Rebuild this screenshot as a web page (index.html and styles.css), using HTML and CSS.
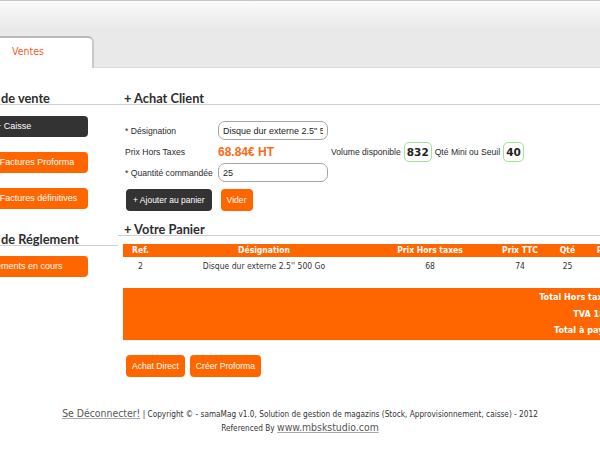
FILE: index.html
```html
<!DOCTYPE html>
<html lang="fr">
<head>
<meta charset="utf-8">
<title>samaMag - Ventes</title>
<link rel="stylesheet" href="styles.css">
</head>
<body>
<div class="topbar">
  <div class="tab">Ventes</div>
</div>
<div class="layout">
  <aside class="sidebar">
    <h3 class="side-title"><span class="pre">Points</span>de vente</h3>
    <a class="sbtn dark">+ Caisse</a>
    <a class="sbtn">+ Factures Proforma</a>
    <a class="sbtn">+ Factures définitives</a>
    <h3 class="side-title second"><span class="pre">Mode</span>de Réglement</h3>
    <a class="sbtn pay">Paiements en cours</a>
  </aside>
  <main class="main">
    <h3 class="sec-title">+ Achat Client</h3>
    <div class="form">
      <div class="frow r1">
        <span class="lbl">* Désignation</span>
        <input class="inp" type="text" value="Disque dur externe 2.5&quot; 500 Go">
      </div>
      <div class="frow r2">
        <span class="lbl">Prix Hors Taxes</span>
        <span class="price">68.84€ HT</span>
        <span class="info">Volume disponible</span>
        <span class="gbox">832</span>
        <span class="info">Qté Mini ou Seuil</span>
        <span class="gbox">40</span>
      </div>
      <div class="frow r3">
        <span class="lbl">* Quantité commandée</span>
        <input class="inp" type="text" value="25">
      </div>
      <div class="actions">
        <a class="btn dark">+ Ajouter au panier</a>
        <a class="btn">Vider</a>
      </div>
    </div>
    <h3 class="sec-title panier">+ Votre Panier</h3>
    <table class="cart">
      <colgroup>
        <col class="c-ref"><col class="c-des"><col class="c-pht"><col class="c-ttc"><col class="c-qte"><col class="c-tot">
      </colgroup>
      <thead>
        <tr><th>Ref.</th><th>Désignation</th><th>Prix Hors taxes</th><th>Prix TTC</th><th>Qté</th><th>Prix Total</th></tr>
      </thead>
      <tbody>
        <tr><td>2</td><td>Disque dur externe 2.5'' 500 Go</td><td>68</td><td>74</td><td>25</td><td>1850</td></tr>
      </tbody>
    </table>
    <div class="totals">
      <div class="trow"><span class="tl">Total Hors taxes :</span><span class="tv">1700 €</span></div>
      <div class="trow"><span class="tl">TVA 18% :</span><span class="tv">306 €</span></div>
      <div class="trow"><span class="tl">Total à payer :</span><span class="tv">2006 €</span></div>
    </div>
    <div class="final">
      <a class="btn">Achat Direct</a>
      <a class="btn">Créer Proforma</a>
    </div>
  </main>
</div>
<footer class="footer">
  <p class="f1"><a class="logout">Se Déconnecter!</a> | Copyright © - samaMag v1.0, Solution de gestion de magazins (Stock, Approvisionnement, caisse) - 2012</p>
  <p class="f2">Referenced By <a class="site">www.mbskstudio.com</a></p>
</footer>
</body>
</html>
```
FILE: styles.css
```css
html, body {
  margin: 0;
  padding: 0;
}
body {
  width: 600px;
  height: 450px;
  overflow: hidden;
  background: #fff;
  font-family: "Liberation Sans", Arial, sans-serif;
  color: #333;
}
.topbar {
  height: 66px;
  border-top: 1px solid #c6c6c6;
  border-bottom: 1px solid #dcdcdc;
  background: linear-gradient(#fbfbfb 0px, #f3f3f3 12px, #e9e9e9 28px, #e9e9e9 100%);
  display: flex;
  align-items: flex-end;
}
.tab {
  width: 80px;
  height: 30px;
  margin-bottom: -1px;
  margin-left: -2px;
  padding-left: 14px;
  background: #fff;
  border-top: 2px solid #b9b9b9;
  border-right: 2px solid #c9c9c9;
  border-top-right-radius: 6px;
  color: #ff5a2a;
  font-family: "DejaVu Sans Condensed", "DejaVu Sans", sans-serif;
  font-size: 10.5px;
  line-height: 26px;
}
.layout {
  display: flex;
  margin-left: -44px;
  width: 760px;
}
.sidebar {
  width: 162px;
  flex: none;
}
.side-title, .sec-title {
  margin: 0;
  font-family: "Lato", sans-serif;
  font-weight: 700;
  font-size: 12.8px;
  line-height: 12px;
  color: #2e2e2e;
  border-bottom: 1px solid #cfcfcf;
  padding-top: 2px;
  padding-bottom: 0;
  white-space: nowrap;
}
.side-title {
  margin-top: 22px;
}
.side-title .pre {
  display: inline-block;
  width: 45px;
}
.side-title.second {
  margin-top: 22px;
}
.sbtn {
  display: block;
  box-sizing: border-box;
  width: 132px;
  height: 21px;
  margin-top: 11px;
  padding-left: 36px;
  border-radius: 4px;
  background: #ff6600;
  color: #fff;
  font-size: 9px;
  line-height: 21px;
  white-space: nowrap;
}
.sbtn + .sbtn { margin-top: 15px; }
.sbtn.dark { background: #333; padding-left: 40px; }
.sbtn.pay { margin-top: 10px; padding-left: 27px; }
.main {
  flex: none;
  width: 598px;
}
.sec-title {
  padding-left: 6px;
}
.main > .sec-title:first-child {
  margin-top: 22px;
}
.form {
  padding-left: 7px;
}
.frow {
  display: flex;
  align-items: center;
}
.r1 { margin-top: 16px; height: 19px; }
.r2 { margin-top: 2px; height: 20px; }
.r3 { margin-top: 1px; height: 19px; }
.lbl {
  width: 93px;
  flex: none;
  font-size: 8.6px;
  color: #2a2a2a;
  white-space: nowrap;
}
.inp {
  box-sizing: border-box;
  width: 110px;
  height: 19px;
  margin: 0;
  padding: 0 4px;
  border: 1px solid #a5a5a5;
  border-radius: 7px;
  font-family: "Liberation Sans", Arial, sans-serif;
  font-size: 9px;
  color: #222;
  background: #fff;
  outline: none;
}
.price {
  width: 113px;
  flex: none;
  font-weight: 700;
  font-size: 12px;
  color: #ff6a13;
}
.info {
  font-size: 8.6px;
  color: #2a2a2a;
  white-space: nowrap;
}
.gbox {
  box-sizing: border-box;
  height: 20px;
  margin: 0 3px 0 3px;
  padding: 0 2px;
  border: 1px solid #a8dca0;
  border-radius: 5px;
  font-family: "DejaVu Sans", sans-serif;
  font-weight: 700;
  font-size: 10.5px;
  line-height: 18px;
  color: #222;
}
.actions {
  display: flex;
  gap: 9px;
  margin-top: 7px;
  padding-left: 1px;
}
.btn {
  display: inline-block;
  height: 22px;
  padding: 0 6px;
  border-radius: 4px;
  background: #ff6600;
  color: #fff;
  font-size: 8.6px;
  line-height: 22px;
  white-space: nowrap;
}
.btn.dark { background: #333; padding: 0 7px; font-size: 8.5px; }
.sec-title.panier {
  margin-top: 10px;
}
.cart {
  margin-top: 8px;
  margin-left: 5px;
  border-collapse: collapse;
  table-layout: fixed;
  width: 526px;
  font-family: "DejaVu Sans Condensed", "DejaVu Sans", sans-serif;
  font-size: 8.5px;
}
.c-ref { width: 35px; }
.c-des { width: 212px; }
.c-pht { width: 120px; }
.c-ttc { width: 60px; }
.c-qte { width: 35px; }
.c-tot { width: 64px; }
.cart th {
  background: #ff6600;
  color: #fff;
  font-weight: 700;
  height: 13px;
  padding: 0;
  line-height: 13px;
  text-align: center;
  white-space: nowrap;
}
.cart td {
  height: 18px;
  padding: 0;
  text-align: center;
  color: #333;
}
.totals {
  margin-top: 13px;
  margin-left: 5px;
  width: 540px;
  height: 53px;
  box-sizing: border-box;
  padding-top: 1px;
  background: #ff6600;
  background-clip: padding-box;
  border-bottom: 1px solid #f2f2f2;
  color: #fff;
  font-family: "DejaVu Sans Condensed", "DejaVu Sans", sans-serif;
  font-weight: 700;
  font-size: 9px;
}
.trow {
  display: flex;
  height: 16.5px;
  align-items: center;
}
.tl {
  width: 496px;
  text-align: right;
}
.tv {
  padding-left: 6px;
}
.final {
  display: flex;
  gap: 5px;
  margin-top: 14px;
  padding-left: 8px;
}
.footer {
  margin-top: 29px;
  text-align: center;
  font-family: "DejaVu Sans Condensed", "DejaVu Sans", sans-serif;
  font-size: 8.2px;
  color: #333;
}
.footer p { margin: 0; white-space: nowrap; }
.f1 { line-height: 14px; }
.f2 { line-height: 12px; }
.logout, .site {
  font-family: "DejaVu Sans Condensed", "DejaVu Sans", sans-serif;
  font-size: 10.4px;
  color: #555;
  text-decoration: underline;
  text-decoration-color: #aaa;
}
```
